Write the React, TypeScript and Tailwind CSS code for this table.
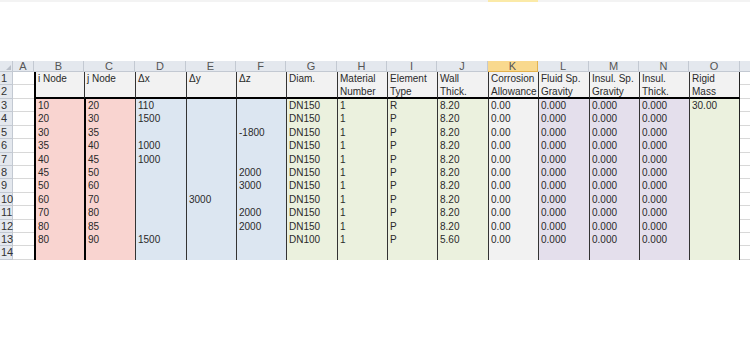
import React from "react";

const cols = [
  { key: "B", w: 50, bg: "bg-[#f9d4d0]" },
  { key: "C", w: 51, bg: "bg-[#f9d4d0]" },
  { key: "D", w: 51, bg: "bg-[#dce6f1]" },
  { key: "E", w: 50, bg: "bg-[#dce6f1]" },
  { key: "F", w: 50, bg: "bg-[#dce6f1]" },
  { key: "G", w: 51, bg: "bg-[#ebf1de]" },
  { key: "H", w: 50, bg: "bg-[#ebf1de]" },
  { key: "I", w: 50, bg: "bg-[#ebf1de]" },
  { key: "J", w: 51, bg: "bg-[#ebf1de]" },
  { key: "K", w: 50, bg: "bg-[#f2f2f2]" },
  { key: "L", w: 51, bg: "bg-[#e4dfec]" },
  { key: "M", w: 50, bg: "bg-[#e4dfec]" },
  { key: "N", w: 50, bg: "bg-[#e4dfec]" },
  { key: "O", w: 51, bg: "bg-[#ebf1de]" },
];

const titles = [
  ["i Node", ""],
  ["j Node", ""],
  ["Δx", ""],
  ["Δy", ""],
  ["Δz", ""],
  ["Diam.", ""],
  ["Material", "Number"],
  ["Element", "Type"],
  ["Wall", "Thick."],
  ["Corrosion", "Allowance"],
  ["Fluid Sp.", "Gravity"],
  ["Insul. Sp.", "Gravity"],
  ["Insul.", "Thick."],
  ["Rigid", "Mass"],
];

const B = ["10", "20", "30", "35", "40", "45", "50", "60", "70", "80", "80"];
const C = ["20", "30", "35", "40", "45", "50", "60", "70", "80", "85", "90"];
const D = ["110", "1500", "", "1000", "1000", "", "", "", "", "", "1500"];
const E = ["", "", "", "", "", "", "", "3000", "", "", ""];
const F = ["", "", "-1800", "", "", "2000", "3000", "", "2000", "2000", ""];

const data: string[][] = B.map((_, i) => [
  B[i],
  C[i],
  D[i],
  E[i],
  F[i],
  i === 10 ? "DN100" : "DN150",
  "1",
  i === 0 ? "R" : "P",
  i === 10 ? "5.60" : "8.20",
  "0.00",
  "0.000",
  "0.000",
  "0.000",
  i === 0 ? "30.00" : "",
]);
data.push(Array(14).fill(""));

const gridCols =
  "grid-cols-[13px_21px_50px_51px_51px_50px_50px_51px_50px_50px_51px_50px_51px_50px_50px_51px_1fr]";

export default function App() {
  return (
    <div className="w-[750px] h-[360px] bg-white overflow-hidden font-['Liberation_Sans',Arial,sans-serif] text-[10px] text-[#2a2a2a]">
      {/* faint strip of the sheet above */}
      <div className="flex h-[2px]">
        <div className="w-[488px] bg-[#f3f3f3]" />
        <div className="w-[50px] bg-[#fbeaa8]" />
        <div className="flex-1 bg-[#f3f3f3]" />
      </div>

      <div className={`mt-[59px] grid ${gridCols}`}>
        {/* column letters */}
        <div className="h-[11px] bg-[#e4e8ee] border-r border-b border-[#c3c9d2] flex items-end justify-center">
          <div className="w-0 h-0 border-l-[5px] border-l-transparent border-b-[5px] border-b-[#b8bec8] mb-[1px] ml-[4px]" />
        </div>
        <div className="h-[11px] bg-[#e4e8ee] border-r border-b border-[#c3c9d2] text-center leading-[11px] text-[11px] text-[#555]">
          A
        </div>
        {cols.map((c) => (
          <div
            key={c.key}
            className={
              c.key === "K"
                ? "h-[11px] bg-[#f9d98e] border-r border-b border-[#e3b24e] text-center leading-[11px] text-[11px] text-[#555]"
                : "h-[11px] bg-[#e4e8ee] border-r border-b border-[#c3c9d2] text-center leading-[11px] text-[11px] text-[#555]"
            }
          >
            {c.key}
          </div>
        ))}
        <div className="h-[11px] bg-[#e4e8ee] border-b border-[#c3c9d2]" />

        {/* rows 1-2 */}
        <div className="row-span-2 flex flex-col">
          <div className="h-[13px] bg-[#e4e8ee] border-r border-b border-[#c3c9d2] pl-[1px] leading-[13px] text-[11px] text-[#333]">
            1
          </div>
          <div className="h-[14px] bg-[#e4e8ee] border-r border-b border-[#c3c9d2] pl-[1px] leading-[13px] text-[11px] text-[#333]">
            2
          </div>
        </div>
        <div className="row-span-2 flex flex-col">
          <div className="h-[13px] border-b border-[#d8d8d8]" />
          <div className="h-[14px] border-b border-[#d8d8d8]" />
        </div>
        {titles.map((t, i) => (
          <div
            key={i}
            className={`row-span-2 h-[27px] bg-[#f2f2f2] border-l border-[#333] border-b-2 border-b-black pl-[2px] leading-[13px] ${
              i === 0 ? "border-l-2 border-l-black" : ""
            } ${i === 13 ? "border-r border-r-[#222]" : ""}`}
          >
            <div>{t[0]}</div>
            <div>{t[1]}</div>
          </div>
        ))}
        <div className="row-span-2 flex flex-col">
          <div className="h-[13px] border-b border-[#d8d8d8]" />
          <div className="h-[14px] border-b border-[#d8d8d8]" />
        </div>

        {/* rows 3-14 */}
        {data.map((row, r) => (
          <React.Fragment key={r}>
            <div className="h-[13.4px] bg-[#e4e8ee] border-r border-b border-[#c3c9d2] pl-[1px] leading-[13px] text-[11px] text-[#333]">
              {r + 3}
            </div>
            <div className="h-[13.4px] border-b border-[#d8d8d8]" />
            {row.map((v, c) => (
              <div
                key={c}
                className={`h-[13.4px] ${cols[c].bg} border-l border-[#333] pl-[2px] leading-[13.4px] whitespace-nowrap ${
                  c < 2 ? "border-l-2 border-l-black" : ""
                } ${c === 13 ? "border-r border-r-[#222]" : ""}`}
              >
                {v}
              </div>
            ))}
            <div className="h-[13.4px] border-b border-[#d8d8d8]" />
          </React.Fragment>
        ))}
      </div>
    </div>
  );
}
